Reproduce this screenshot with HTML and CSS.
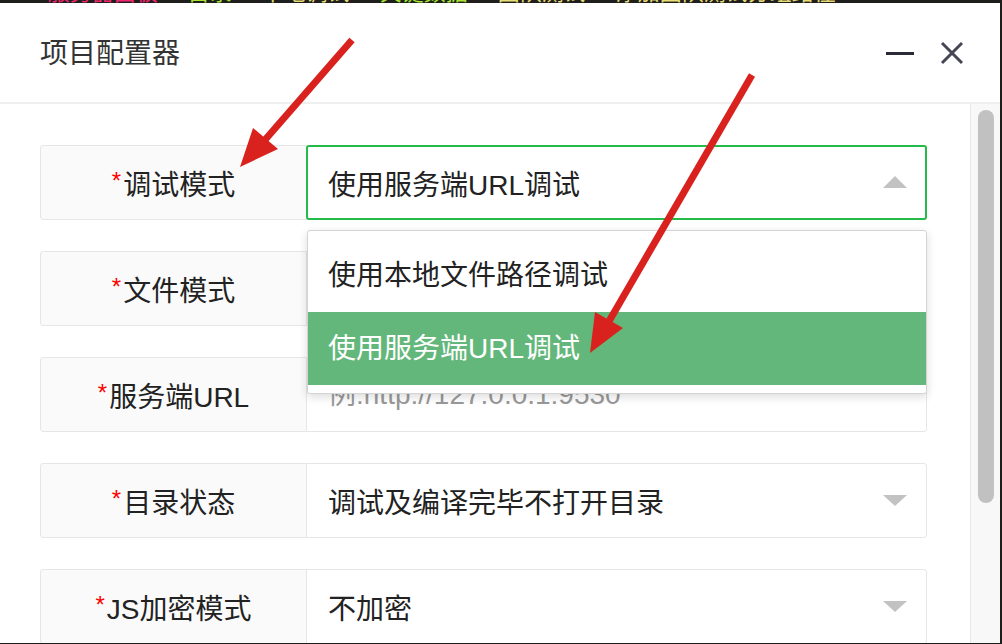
FILE: index.html
```html
<!DOCTYPE html>
<html lang="zh-CN">
<head>
<meta charset="utf-8" />
<title>项目配置器</title>
<link rel="stylesheet" href="styles.css">
</head>
<body>
	<div class="strip">
		<div class="strip-line"><span class="w">•</span><span class="p">服务器面板</span><span class="g">目录</span><span class="y">本地调试</span><span class="g">关键数据</span><span class="y">团队测试</span><span class="y">添加团队测试分组路径</span></div>
	</div>
	<div class="dialog">
		<div class="dialog-head">
			<h1 class="title">项目配置器</h1>
			<div class="head-tools">
				<svg class="icon-min" width="28" height="4" viewBox="0 0 28 4"><rect x="0" y="0" width="28" height="3" fill="#2b2b38"/></svg>
				<svg class="icon-close" width="24" height="24" viewBox="0 0 24 24"><path d="M2 2 L22 22 M22 2 L2 22" stroke="#454553" stroke-width="3" fill="none"/></svg>
			</div>
		</div>
		<div class="dialog-body">
			<div class="form">
				<div class="row">
					<div class="label"><i>*</i>调试模式</div>
					<div class="value focus">使用服务端URL调试<b class="caret up"></b></div>
					<ul class="options">
						<li>使用本地文件路径调试</li>
						<li class="active">使用服务端URL调试</li>
					</ul>
				</div>
				<div class="row">
					<div class="label"><i>*</i>文件模式</div>
					<div class="value">编译后文件<b class="caret"></b></div>
				</div>
				<div class="row">
					<div class="label"><i>*</i>服务端URL</div>
					<div class="value"><input type="text" placeholder="例:http://127.0.0.1:9530" /></div>
				</div>
				<div class="row">
					<div class="label"><i>*</i>目录状态</div>
					<div class="value">调试及编译完毕不打开目录<b class="caret"></b></div>
				</div>
				<div class="row">
					<div class="label"><i>*</i>JS加密模式</div>
					<div class="value">不加密<b class="caret"></b></div>
				</div>
			</div>
			<div class="scrollbar"><div class="thumb"></div></div>
		</div>
	</div>
	<svg class="marks" width="1002" height="644" viewBox="0 0 1002 644">
		<line x1="352" y1="40" x2="264" y2="141" stroke="#d9221e" stroke-width="7"/>
		<polygon points="240,167 253,128 278,149" fill="#d9221e"/>
		<line x1="752" y1="75" x2="608" y2="323" stroke="#d9221e" stroke-width="7"/>
		<polygon points="590,353 595,312 623,328" fill="#d9221e"/>
	</svg>
</body>
</html>
```

FILE: styles.css
```css
body, div, h1, ul, li, input {padding:0; margin:0;}
li {list-style:none;}
body {background:#1e1f1c; width:1002px; height:644px; overflow:hidden; position:relative; font-family:"Liberation Sans", "Noto Sans CJK SC", sans-serif; color:#222;}

.strip {height:3px; overflow:hidden;}
.strip-line {height:20px; margin-top:-17px; padding-left:36px; font-size:22px; line-height:20px; white-space:nowrap; overflow:hidden;}
.strip span {margin-right:30px;}
.strip .w {color:#eee; margin-right:4px;}
.strip .p {color:#f0266f;}
.strip .g {color:#a6e22e;}
.strip .y {color:#e6db74;}

.dialog {width:1000px; height:640px; background:#fff; display:flex; flex-direction:column; overflow:hidden;}
.dialog-head {height:99px; flex:none; border-bottom:2px solid #efefef; display:flex; align-items:center; justify-content:space-between; padding:0 36px 0 40px;}
.title {font-size:28px; font-weight:normal; color:#333; margin-top:-4px;}
.head-tools {display:flex; align-items:center; gap:26px;}
.icon-min {display:block; margin-top:2px;}
.icon-close {display:block;}

.dialog-body {flex:1; display:flex; min-height:0;}
.form {flex:1; padding:41px 0 0 40px; display:flex; flex-direction:column; gap:31px;}
.row {width:887px; height:75px; flex:none; display:flex; position:relative; font-size:28px;}
.label {width:267px; box-sizing:border-box; border:1px solid #e6e6e6; border-radius:3px 0 0 3px; background:#fafafa; display:flex; align-items:center; justify-content:center;}
.label i {font-style:normal; color:#f00; font-size:24px; align-self:flex-start; margin-top:21px; margin-right:2px;}
.value {flex:1; margin-left:-1px; box-sizing:border-box; border:1px solid #e6e6e6; border-radius:0 3px 3px 0; display:flex; align-items:center; padding:0 19px 0 21px; position:relative;}
.value.focus {border:2px solid #24bb48; border-radius:3px; padding-left:20px; padding-right:18px;}
.value input {width:100%; border:none; outline:none; background:transparent; font:inherit; color:#222;}
.value input::placeholder {color:#999;}
.caret {margin-left:auto; width:0; height:0; border-left:12px solid transparent; border-right:12px solid transparent; border-top:11px solid #c2c2c2;}
.caret.up {border-top:none; border-bottom:12px solid #c2c2c2; margin-top:-2px;}

.options {position:absolute; top:85px; left:267px; width:620px; box-sizing:border-box; background:#fff; border:1px solid #d4d4d4; border-radius:3px; box-shadow:0 3px 10px rgba(0,0,0,.14); padding:8px 0; z-index:2;}
.options li {height:73px; line-height:73px; padding-left:20px; color:#222;}
.options li.active {background:#63b77a; color:#fff;}

.scrollbar {flex:none; width:16px; border-left:1px solid #e8e8e8; background:#f8f8f8; padding:6px 6px 0 7px;}
.thumb {height:393px; border-radius:8px; background:#c1c1c1;}

.marks {position:absolute; left:0; top:0; z-index:10; pointer-events:none;}
```
